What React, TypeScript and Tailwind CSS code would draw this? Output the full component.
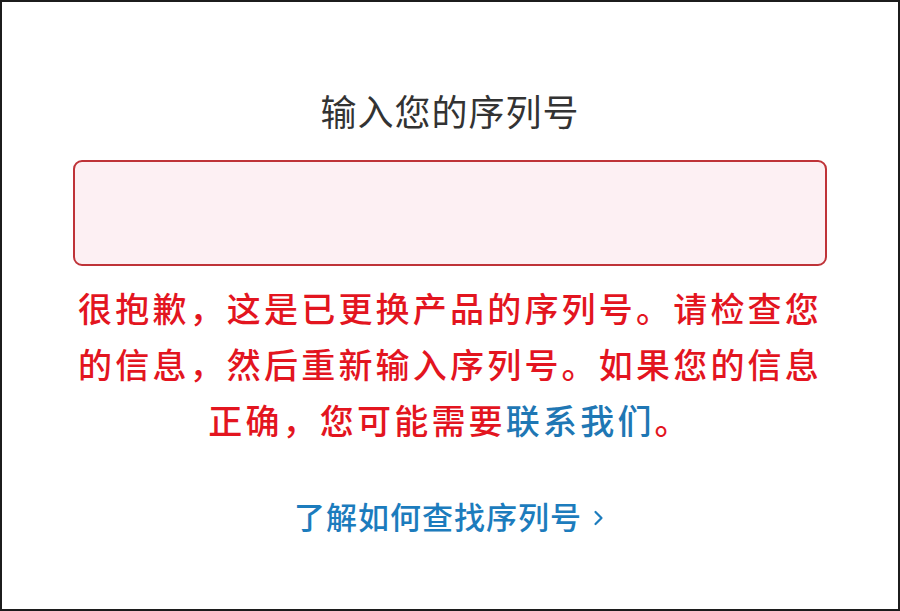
import React from "react";

const LINES = [
    "很抱歉，这是已更换产品的序列号。请检查您",
    "的信息，然后重新输入序列号。如果您的信息",
];

export default function App() {
    return (
        <div
            className="w-[900px] h-[611px] border-2 border-[#1c1c1c] bg-white flex flex-col items-center"
            style={{fontFamily: '"Noto Sans CJK SC", "Noto Sans", sans-serif'}}
        >
            <h1 className="mt-[86px] text-[36px] leading-[44px] tracking-[1px] text-[#333333] font-normal">
                输入您的序列号
            </h1>

            <div className="mt-[28px] w-[754px] h-[106px] rounded-[9px] border-2 border-[#bf3338] bg-[#fdf0f3]"/>

            <p className="mt-[14px] text-center text-[34px] leading-[56px] tracking-[3.2px] font-medium text-[#e3151f] whitespace-nowrap">
                {LINES[0]}<br/>
                {LINES[1]}<br/>
                正确，您可能需要<span className="text-[#1f77b4]">联系我们</span>。
            </p>

            <a className="mt-[48px] flex items-center gap-[10px] text-[31px] leading-[40px] tracking-[1px] font-medium text-[#1c7cbd]">
                <span>了解如何查找序列号</span>
                <svg width="14" height="24" viewBox="0 0 14 24" className="mt-[4px]">
                    <path d="M3.5 6 L9.5 12 L3.5 18" fill="none" stroke="#1c7cbd" strokeWidth="2.2"
                          strokeLinecap="round" strokeLinejoin="round"/>
                </svg>
            </a>
        </div>
    );
}
